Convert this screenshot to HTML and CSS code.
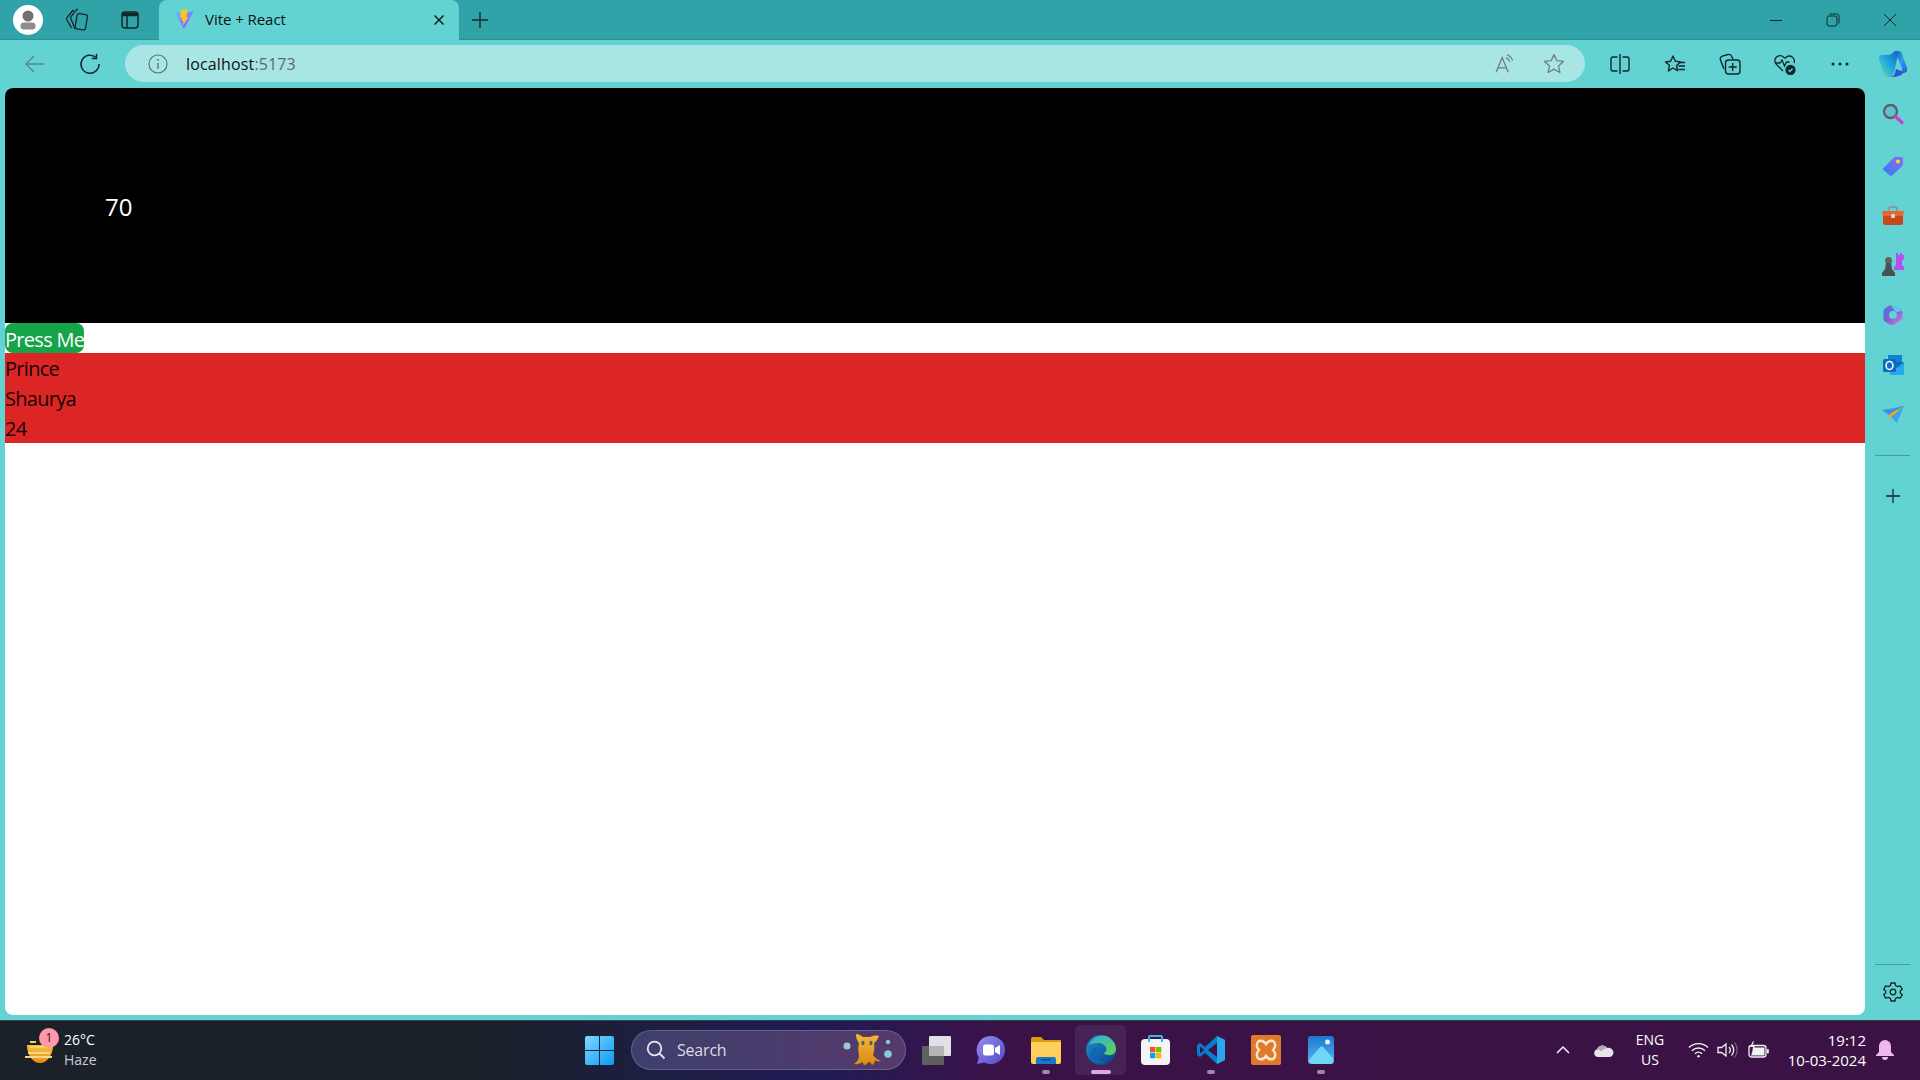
FILE: index.html
```html
<!DOCTYPE html>
<html lang="en">
<head>
<meta charset="utf-8">
<title>Vite + React</title>
<link rel="stylesheet" href="styles.css">
</head>
<body>
<div class="tabbar">
  <div class="slot profile"><svg width="30" height="30" viewBox="0 0 30 30"><circle cx="15" cy="15" r="15" fill="#fff"/><circle cx="15" cy="11" r="5.500" fill="#707070"/><rect x="7.500" y="17.500" width="15" height="7" rx="3.500" fill="#8c8c8c"/></svg></div>
  <div class="slot collections-tab"><svg width="24" height="24" viewBox="0 0 24 24" fill="none" stroke="#14282a" stroke-width="1.300" stroke-linejoin="round"><path d="M9 2.500a2 2 0 0 0-2 1L2 9.500a2 2 0 0 0 0 2.500l4.500 8"/><path d="M13 1.500a2 2 0 0 0-2 .8L6 8.500a2 2 0 0 0 0 2.500l4 10"/><rect x="11" y="6" width="10.500" height="15.500" rx="2.200" transform="rotate(10 16 14)" fill="#2fa3a7"/></svg></div>
  <div class="slot vtabs"><svg width="20" height="20" viewBox="0 0 20 20" fill="none" stroke="#14282a" stroke-width="1.500"><rect x="2" y="2" width="16" height="16" rx="3"/><path d="M2 4.500h16" stroke-width="3.500"/><path d="M7 6v12"/></svg></div>
  <div class="tab">
    <svg class="favicon" width="22" height="22" viewBox="0 0 20 20"><defs><linearGradient id="vg" x1="0" y1="0" x2="1" y2="1"><stop offset="0" stop-color="#41d1ff"/><stop offset="1" stop-color="#bd34fe"/></linearGradient></defs><path d="M1 3l9 1.600L19 3 10 19z" fill="url(#vg)"/><path d="M13.500 0.800L7 2.200 6.600 9l2-.4-.6 3.400 1.600-.4-.6 4.400L14 8l-2.200.4z" fill="#ffc517"/></svg>
    <span class="tab-title">Vite + React</span>
    <svg class="tab-close" width="12" height="12" viewBox="0 0 12 12" stroke="#111" stroke-width="1.400"><path d="M1.500 1.500l9 9M10.500 1.500l-9 9"/></svg>
  </div>
  <div class="slot newtab"><svg width="18" height="18" viewBox="0 0 18 18" stroke="#14282a" stroke-width="1.400"><path d="M9 1v16M1 9h16"/></svg></div>
  <div class="spacer"></div>
  <div class="slot winctl"><svg width="14" height="14" viewBox="0 0 14 14" stroke="#14282a" stroke-width="1"><path d="M1 7.500h12"/></svg></div>
  <div class="slot winctl"><svg width="14" height="14" viewBox="0 0 14 14" fill="none" stroke="#14282a" stroke-width="1"><rect x="1" y="3" width="10" height="10" rx="2"/><path d="M3.500 1h7a2.500 2.500 0 0 1 2.500 2.500v7"/></svg></div>
  <div class="slot winctl"><svg width="14" height="14" viewBox="0 0 14 14" stroke="#14282a" stroke-width="1"><path d="M1 1l12 12M13 1L1 13"/></svg></div>
</div>

<div class="toolbar">
  <div class="slot tool-nav"><svg width="22" height="22" viewBox="0 0 22 22" fill="none" stroke="#4f8b8e" stroke-width="1.400"><path d="M20 11H2M10 3l-8 8 8 8"/></svg></div>
  <div class="slot tool-nav reload"><svg width="22" height="22" viewBox="0 0 22 22" fill="none" stroke="#14282a" stroke-width="1.500"><path d="M17 4.500A9 9 0 1 0 20 11"/><path d="M17.500 0.800v4.700h-4.700"/></svg></div>
  <div class="address">
    <svg class="addr-info" width="20" height="20" viewBox="0 0 20 20" fill="none" stroke="#5c6b6c" stroke-width="1.100"><circle cx="10" cy="10" r="9"/><path d="M10 9v6" stroke-width="1.300"/><circle cx="10" cy="6" r=".9" fill="#5c6b6c" stroke="none"/></svg>
    <span class="url">localhost<span class="url-port">:5173</span></span>
    <div class="spacer"></div>
    <div class="addr-btn"><svg width="22" height="20" viewBox="0 0 20 18" fill="none" stroke="#6f7f80" stroke-width="1.200"><path d="M1 16.500L6.500 3 12 16.500M3 12.500h7"/><path d="M10 3.500a5 5 0 0 1 3.500 3.500M11 .8a8 8 0 0 1 5 5"/></svg></div>
    <div class="addr-btn"><svg width="22" height="21" viewBox="0 0 22 21" fill="none" stroke="#6f7f80" stroke-width="1.300" stroke-linejoin="round"><path d="M11 1.500l2.800 6.200 6.700.7-5 4.500 1.400 6.600-5.900-3.400-5.900 3.400 1.400-6.600-5-4.500 6.700-.7z"/></svg></div>
  </div>
  <div class="tool-right">
    <div class="slot tool-act"><svg width="20" height="20" viewBox="0 0 20 20" fill="none" stroke="#14282a" stroke-width="1.400"><path d="M7.500 3H3a2 2 0 0 0-2 2v10a2 2 0 0 0 2 2h4.500M12.500 3H17a2 2 0 0 1 2 2v10a2 2 0 0 1-2 2h-4.500"/><path d="M10 0v20"/></svg></div>
    <div class="slot tool-act"><svg width="22" height="22" viewBox="0 0 22 22" fill="none" stroke="#14282a" stroke-width="1.400" stroke-linejoin="round"><path d="M9 2l2.300 5.300 5.200.6-3.900 3.600 1 5.200L9 14l-4.600 3 1-5.700L1.500 8l5.200-.7z" transform="translate(0 1)"/><path d="M15 9.500h6M14.500 13h6.500M14.500 16.500h6.500"/></svg></div>
    <div class="slot tool-act"><svg width="22" height="22" viewBox="0 0 22 22" fill="none" stroke="#14282a" stroke-width="1.400"><path d="M5 16L1.500 7a3 3 0 0 1 1.800-3.800L9 1.500a3 3 0 0 1 3.500 1.500L14 6"/><rect x="6.500" y="7" width="14.500" height="14" rx="3"/><path d="M13.700 10v8M9.700 14h8"/></svg></div>
    <div class="slot tool-act"><svg width="22" height="22" viewBox="0 0 22 22" fill="none" stroke="#14282a" stroke-width="1.300"><path d="M9 18L2.500 11.500a5 5 0 0 1 7-7.500l1.500 1.200 1.500-1.200a5 5 0 0 1 7.500 6"/><path d="M1 10h5l2-3 2.500 6 2-4h3"/><circle cx="16.500" cy="17" r="4.500" fill="#14282a"/><path d="M14.500 17l1.500 1.500 2.500-3" stroke="#62d2d3"/></svg></div>
    <div class="slot tool-act"><svg width="20" height="4" viewBox="0 0 20 4" fill="#14282a"><circle cx="3" cy="2" r="1.500"/><circle cx="10" cy="2" r="1.500"/><circle cx="17" cy="2" r="1.500"/></svg></div>
    <div class="slot tool-copilot"><svg width="30" height="28" viewBox="0 0 30 28"><defs><linearGradient id="cp1" x1="0" y1="1" x2="1" y2="0"><stop offset="0" stop-color="#7ce08f"/><stop offset=".5" stop-color="#1fa8e0"/><stop offset="1" stop-color="#1560c8"/></linearGradient><linearGradient id="cp2" x1="0" y1="0" x2="1" y2="1"><stop offset="0" stop-color="#0f6bb0"/><stop offset=".5" stop-color="#2b9bef"/><stop offset="1" stop-color="#2f55d8"/></linearGradient></defs><path d="M17 1h3c2 0 3.500 1 4 3l5 14c1 3-1 5-4 5h-4c2 0 3.500-2 3-4.500L19 6c-.5-2-1-4-2-5z" fill="url(#cp2)"/><path d="M13 27h-3c-2 0-3.500-1-4-3L1 10C0 7 2 5 5 5h5c3 0 4-2 7-4 2-1 3 2 3 4l-3 13c-.7 4-1.500 9-4 9z" fill="url(#cp1)"/><path d="M12 27c2 0 4-1 5-4l1-4 8 3c-2 3-5 5-14 5z" fill="#2f55d8"/></svg></div>
  </div>
</div>

<div class="workspace">
  <main class="page">
    <div class="hero">70</div>
    <button class="press" type="button">Press Me</button>
    <div class="names">
      <div class="name-row">Prince</div>
      <div class="name-row">Shaurya</div>
      <div class="name-row">24</div>
    </div>
  </main>
  <aside class="sidebar">
    <div class="side-item"><svg width="22" height="22" viewBox="0 0 22 22" fill="none"><circle cx="8.500" cy="8.500" r="6.500" fill="#5cc4d0" stroke="#5f6062" stroke-width="2.400"/><path d="M14 14l6 5.500" stroke="#c93fd8" stroke-width="3.200" stroke-linecap="round"/></svg></div>
    <div class="side-item side-low"><svg width="22" height="22" viewBox="0 0 22 22"><defs><linearGradient id="tg" x1="0" y1="1" x2="1" y2="0"><stop offset="0" stop-color="#2f7cf0"/><stop offset="1" stop-color="#8b6df0"/></linearGradient></defs><path d="M1.500 13L12 2.500c.5-.5 1-.5 1.500-.5H20c.5 0 1 .5 1 1v6.500c0 .5-.2 1-.5 1.300L10 20.500c-.6.600-1.500.6-2 0L1.500 15c-.6-.6-.6-1.400 0-2z" fill="url(#tg)"/><circle cx="16" cy="6.500" r="2" fill="#ffd23f"/></svg></div>
    <div class="side-item side-low"><svg width="24" height="20" viewBox="0 0 24 20"><path d="M8 5V2.500C8 1.500 8.500 1 9.500 1h5c1 0 1.500.5 1.500 1.500V5" fill="none" stroke="#8a8f94" stroke-width="1.500"/><path d="M1 5h22l-1 5H2z" fill="#e8662c"/><path d="M2 10h20v7c0 1-.7 2-2 2H4c-1.300 0-2-1-2-2z" fill="#c7481a"/><rect x="10" y="8" width="4" height="4" rx="1" fill="#d9d9d9"/></svg></div>
    <div class="side-item"><svg width="24" height="24" viewBox="0 0 24 24"><path d="M15 0h2v2h2V0h2v2h2v4l-2 1.500V12l2 2v3h-10v-3l2-2V7.500L15 6z" fill="#b84ef0"/><circle cx="7.500" cy="7.500" r="3.500" fill="#5f6365"/><path d="M5 10h5l1 6 3 4v3H1v-3l3-4z" fill="#4c4f50"/></svg></div>
    <div class="side-item"><svg width="22" height="22" viewBox="0 0 22 22"><defs><linearGradient id="m3" x1="0" y1="0" x2="1" y2="1"><stop offset="0" stop-color="#3c7ae0"/><stop offset=".5" stop-color="#8b5bd0"/><stop offset="1" stop-color="#c58be8"/></linearGradient></defs><path d="M9 1.500L18 5c1.500.6 2.500 2 2.500 3.500v5c0 1.500-1 3-2.500 3.500l-6 3.500c-1.500.8-3 .5-4 0L3.500 18c-1.300-.8-2-2-2-3.500V7.500C1.500 6 2.300 4.800 3.500 4L7 1.800c.6-.4 1.400-.5 2-.3z" fill="url(#m3)"/><circle cx="11" cy="11" r="4" fill="#62d2d3"/><path d="M9 1.500L18 5c1 .5 1.500 1.500 2 2l-6 1c-2-2-3-4-5-6.500z" fill="#5ec8ee"/></svg></div>
    <div class="side-item"><svg width="22" height="22" viewBox="0 0 22 22"><rect x="6" y="1" width="14" height="7" fill="#1282d6"/><path d="M8 8h14v12a1 1 0 0 1-1 1H8z" fill="#28a8ea"/><path d="M8 8h14l-7 6z" fill="#0a6dbf"/><rect x="1" y="5" width="13" height="13" rx="1.500" fill="#0f6cbd"/><ellipse cx="7.500" cy="11.500" rx="3.400" ry="4" fill="none" stroke="#fff" stroke-width="1.600"/></svg></div>
    <div class="side-item"><svg width="24" height="20" viewBox="0 0 24 20"><path d="M1 5L23 1 16 18 11 13z" fill="#3da3ee"/><path d="M1 5h9l13-4-13 8z" fill="#2e8fe0"/><path d="M5 14L10 8l13-7-13 11z" fill="#f0a818"/></svg></div>
    <div class="side-rule"></div>
    <div class="side-item side-plus"><svg width="16" height="16" viewBox="0 0 16 16" stroke="#14282a" stroke-width="1.300"><path d="M8 1v14M1 8h14"/></svg></div>
    <div class="spacer"></div>
    <div class="side-rule"></div>
    <div class="side-item side-gear"><svg width="20" height="20" viewBox="0 0 20 20" fill="none" stroke="#14282a" stroke-width="1.300" stroke-linejoin="round"><path d="M8 1h4l.6 2.600 2.200 1.100 2.500-.8 2 3.400-2 1.700v2l2 1.700-2 3.400-2.500-.8-2.200 1.100L12 19H8l-.6-2.600-2.200-1.100-2.500.8-2-3.400 2-1.700V9L.7 7.300l2-3.400 2.500.8 2.200-1.100z"/><circle cx="10" cy="10" r="2.800"/></svg></div>
  </aside>
</div>

<footer class="taskbar">
  <div class="weather">
    <div class="weather-icon">
      <svg width="30" height="30" viewBox="0 0 30 30"><defs><linearGradient id="sun" x1="0" y1="0" x2="0" y2="1"><stop offset="0" stop-color="#f7c23c"/><stop offset="1" stop-color="#f08a12"/></linearGradient></defs><path d="M3 9h26a13 18 0 0 1-26 0z" fill="url(#sun)"/><rect x="6" y="5" width="6" height="2" fill="#f3cf6a"/><rect x="6" y="10" width="16" height="2" fill="#f3cf6a"/><rect x="4" y="16" width="22" height="2" fill="#f3d98a"/><rect x="1" y="20" width="27" height="2" fill="#f3d98a"/></svg>
      <span class="badge">1</span>
    </div>
    <div class="weather-text"><div class="temp">26°C</div><div class="haze">Haze</div></div>
  </div>
  <div class="task-slot"><svg width="29" height="29" viewBox="0 0 29 29"><defs><linearGradient id="wg" x1="0" y1="0" x2="1" y2="1"><stop offset="0" stop-color="#7fd8ff"/><stop offset="1" stop-color="#0a9bf5"/></linearGradient></defs><path d="M2 0h12v14H0V2a2 2 0 0 1 2-2zM15 0h12a2 2 0 0 1 2 2v12H15zM0 15h14v14H2a2 2 0 0 1-2-2zM15 15h14v12a2 2 0 0 1-2 2H15z" fill="url(#wg)"/></svg></div>
  <div class="search">
    <svg width="20" height="20" viewBox="0 0 20 20" fill="none" stroke="#e6e6ee" stroke-width="1.800"><circle cx="8.500" cy="8.500" r="6.800"/><path d="M13.500 13.500l5 5"/></svg>
    <span class="search-label">Search</span>
    <div class="spacer"></div>
    <svg class="mascot" width="50" height="36" viewBox="0 0 50 36"><defs><linearGradient id="mas" x1="0" y1="0" x2="0" y2="1"><stop offset="0" stop-color="#f7b733"/><stop offset="1" stop-color="#d98a12"/></linearGradient></defs><circle cx="4" cy="14" r="3.500" fill="#9fc9cf"/><circle cx="45" cy="10" r="2.200" fill="#8fc7d8"/><circle cx="45" cy="22" r="3.800" fill="#8fc7d8"/><path d="M13 2c3 0 5 2 7 3h7c2-1 5-2 9-1-1 3-3 6-5 7 1 5 0 9-1 12 2 3 5 5 8 6-3 1-5 0-6-1 0 2-1 4-3 5-1-2-2-3-3-3-2 1-3 3-5 3-1-1-1-2-1-3-2 1-6 3-9 2 3-2 5-5 5-8-1-4-1-9 0-13-2-2-3-5-3-9z" fill="url(#mas)"/><ellipse cx="20" cy="11" rx="1.500" ry="2.300" fill="#2c6a78"/><ellipse cx="28" cy="11" rx="1.500" ry="2.300" fill="#2c6a78"/></svg>
  </div>
  <div class="task-slot"><svg width="30" height="29" viewBox="0 0 30 29"><rect x="1" y="10" width="22" height="19" rx="1" fill="#5f5f5f"/><rect x="8" y="0" width="22" height="20" rx="1" fill="#f2f2f2" fill-opacity=".92"/><rect x="8" y="10" width="15" height="10" fill="#b5b5b5"/></svg></div>
  <div class="task-slot"><svg width="30" height="30" viewBox="0 0 30 30"><defs><linearGradient id="chat" x1="0" y1="0" x2="1" y2="1"><stop offset="0" stop-color="#9a8cf0"/><stop offset="1" stop-color="#4f4bc8"/></linearGradient></defs><path d="M15 1a14 14 0 1 1-6.500 26.400L1 29l1.800-6.600A14 14 0 0 1 15 1z" fill="url(#chat)"/><rect x="7" y="9.500" width="11" height="11" rx="2.500" fill="#fff"/><path d="M19 13l5-3v10l-5-3z" fill="#fff"/></svg></div>
  <div class="task-slot"><svg width="30" height="27" viewBox="0 0 30 27"><path d="M0 2a2 2 0 0 1 2-2h8l3 3h17v5H0z" fill="#dd9d0a"/><path d="M0 5h30v20a2 2 0 0 1-2 2H2a2 2 0 0 1-2-2z" fill="#fdd05c"/><path d="M5 22a2 2 0 0 1 2-2h16a2 2 0 0 1 2 2v5H5z" fill="#1a78c8"/><rect x="10" y="22" width="10" height="1.500" fill="#0b4f94"/></svg><span class="dot"></span></div>
  <div class="task-slot task-active"><svg width="30" height="30" viewBox="0 0 30 30"><defs><linearGradient id="eg" x1="0" y1="0" x2="1" y2="1"><stop offset="0" stop-color="#1f8fd0"/><stop offset="1" stop-color="#0b3f8a"/></linearGradient><linearGradient id="eg2" x1="0" y1="0" x2="1" y2="1"><stop offset="0" stop-color="#2cb0dc"/><stop offset="1" stop-color="#62d257"/></linearGradient></defs><circle cx="15" cy="15" r="15" fill="url(#eg)"/><path d="M3 10C6 2 14 0 19 1c6 1 11 7 11 13 0 4-3 6-7 6-3 0-5-1-5-2 2-1 3-3 2-5-1-3-4-5-8-5-4 0-7 1-9 2z" fill="url(#eg2)"/><path d="M12 13c-3 1-4 5-2 9 2 3 5 5 9 5-4 2-9 2-13-2-2-3-2-7 0-10 1-2 4-3 6-2z" fill="#0d67b5"/></svg><span class="dot dot-active"></span></div>
  <div class="task-slot"><svg width="29" height="30" viewBox="0 0 29 30"><rect y="4" width="29" height="26" rx="4" fill="#f4f4f4"/><path d="M8 7V2a1 1 0 0 1 1-1h11a1 1 0 0 1 1 1v5" fill="none" stroke="#35b8e6" stroke-width="2"/><rect x="9" y="12" width="5.300" height="5.300" fill="#f25022"/><rect x="15" y="12" width="5.300" height="5.300" fill="#7fba00"/><rect x="9" y="18" width="5.300" height="5.300" fill="#00a4ef"/><rect x="15" y="18" width="5.300" height="5.300" fill="#ffb900"/></svg></div>
  <div class="task-slot"><svg width="30" height="30" viewBox="0 0 30 30"><path d="M21 1l8 4v20l-8 4L9 18l-5 4-3-2V10l3-2 5 4z" fill="#0a7dc9"/><path d="M21 1l8 4v20l-8 4z" fill="#2ba6ec"/><path d="M21 8L12 15l9 7z" fill="#3e0f4a"/><path d="M4 11.500L8 15l-4 3.500z" fill="#3e0f4a"/></svg><span class="dot"></span></div>
  <div class="task-slot"><svg width="30" height="30" viewBox="0 0 30 30"><rect width="30" height="30" rx="2" fill="#e07a2b"/><path d="M8 6c3-1 5 0 7 3 2-3 4-4 7-3 3 2 3 6 0 9 3 3 3 7 0 9-3 1-5 0-7-3-2 3-4 4-7 3-3-2-3-6 0-9-3-3-3-7 0-9z" fill="none" stroke="#f9e6d3" stroke-width="2.400"/></svg></div>
  <div class="task-slot"><svg width="26" height="28" viewBox="0 0 26 28"><defs><linearGradient id="ph" x1="0" y1="0" x2="0" y2="1"><stop offset="0" stop-color="#1c78cf"/><stop offset="1" stop-color="#57b5ee"/></linearGradient></defs><rect width="26" height="28" rx="3" fill="url(#ph)"/><circle cx="19.500" cy="6" r="2.500" fill="#e4f3ff"/><path d="M1 24l11-13c1-1 2-1 3 0l10 11v3a3 3 0 0 1-3 3H6c-3 0-5-2-5-4z" fill="#6fd6f6"/></svg><span class="dot"></span></div>
  <div class="tray">
    <div class="tray-icon"><svg width="16" height="10" viewBox="0 0 16 10" fill="none" stroke="#f2f2f2" stroke-width="1.500"><path d="M2 8l6-6 6 6"/></svg></div>
    <div class="tray-icon"><svg width="22" height="13" viewBox="0 0 22 13"><path d="M6 13a4 4 0 0 1-1-7.800A6 6 0 0 1 15.500 4 4.500 4.500 0 0 1 18 13z" fill="#e8e4ea"/><path d="M5 5.200A6 6 0 0 1 15.500 4c-3 .3-5 2-6 3.500-1.500-1.300-3-2-4.500-2.300z" fill="#b9a8b9"/></svg></div>
    <div class="lang"><div>ENG</div><div>US</div></div>
    <div class="tray-small wifi"><svg width="21" height="16" viewBox="0 0 21 16" fill="none" stroke="#f2f2f2" stroke-width="1.400"><path d="M1 5.500a13.500 13.500 0 0 1 19 0M4 8.700a9.300 9.300 0 0 1 13 0M7 11.700a5 5 0 0 1 7 0"/><circle cx="10.500" cy="14.300" r="1.200" fill="#f2f2f2" stroke="none"/></svg></div>
    <div class="tray-small speaker"><svg width="21" height="18" viewBox="0 0 21 18" fill="none" stroke="#f2f2f2" stroke-width="1.300"><path d="M1 6.500v5h3.500L9 15V3L4.500 6.500z"/><path d="M12 6a4 4 0 0 1 0 6M14.500 3.500a8 8 0 0 1 0 11"/><path d="M17.500 1.500a12 12 0 0 1 0 15" stroke="#6f5a70"/></svg></div>
    <div class="tray-small battery"><svg width="21" height="18" viewBox="0 0 21 18" fill="none"><rect x="1" y="4.500" width="17" height="11.500" rx="2.500" stroke="#f2f2f2" stroke-width="1.300"/><path d="M3 14.500L5.500 6.500h11v8z" fill="#f2f2f2"/><rect x="19" y="8" width="1.800" height="4.500" rx=".8" fill="#f2f2f2"/><path d="M5.500 0.500L3 5.500h3L5 9" stroke="#f2f2f2" stroke-width="1.200"/></svg></div>
    <div class="clock"><div>19:12</div><div>10-03-2024</div></div>
    <div class="tray-icon"><svg width="18" height="20" viewBox="0 0 18 20"><path d="M9 0a6 6 0 0 1 6 6v6l3 3v1H0v-1l3-3V6a6 6 0 0 1 6-6z" fill="#f0b8ee"/><path d="M6 17h6a3 3 0 0 1-6 0z" fill="#f0b8ee"/></svg></div>
  </div>
</footer>
</body>
</html>
```

FILE: styles.css
```css
* { box-sizing: border-box; }

html, body {
  margin: 0;
  height: 100%;
}

body {
  width: 1920px;
  height: 1080px;
  overflow: hidden;
  display: flex;
  flex-direction: column;
  font-family: "Open Sans", "Noto Sans", sans-serif;
  background: #62d2d3;
  color: #000;
}

svg { display: block; flex: none; }

.spacer { flex: 1; }

.slot {
  display: flex;
  align-items: center;
  justify-content: center;
  height: 100%;
  flex: none;
}

/* Tab strip */
.tabbar {
  height: 40px;
  flex: none;
  display: flex;
  padding: 0 2px 0 8px;
  background: #2fa3a7;
  box-shadow: inset 0 -1px 0 #2b8f93;
}

.profile { width: 40px; }
.collections-tab { width: 58px; }
.vtabs { width: 48px; }

.tab {
  width: 300px;
  margin-left: 5px;
  display: flex;
  align-items: center;
  padding: 0 14px 2px 14px;
  background: #62d2d3;
  border-radius: 8px 8px 0 0;
}

.tab-title {
  margin-left: 10px;
  font-size: 15px;
  letter-spacing: -0.05px;
  color: #111;
  flex: 1;
}

.tab-close { margin-top: 2px; }

.newtab { width: 42px; }
.winctl { width: 57px; }

/* Toolbar */
.toolbar {
  height: 48px;
  flex: none;
  display: flex;
  align-items: center;
  padding-left: 13px;
  background: #62d2d3;
}

.tool-nav { width: 44px; }
.reload { margin-left: 11px; }

.address {
  width: 1460px;
  height: 37px;
  margin: -1px 0 0 13px;
  display: flex;
  align-items: center;
  padding: 0 11px 0 23px;
  background: #a8e6e6;
  border-radius: 19px;
}

.url {
  margin-left: 18px;
  font-size: 16px;
  letter-spacing: 0.15px;
  color: #111;
}

.url-port { color: #5c6b6c; }

.addr-btn {
  width: 40px;
  margin-left: 10px;
  display: flex;
  justify-content: center;
}

.addr-btn + .addr-btn { margin-left: 8px; }

.tool-right {
  display: flex;
  align-items: center;
  height: 100%;
  margin-left: 7px;
}

.tool-act { width: 55px; }
.tool-copilot { width: 52px; }

/* Browser window body */
.workspace {
  flex: 1;
  min-height: 0;
  display: flex;
}

.page {
  width: 1860px;
  margin: 0 0 5px 5px;
  background: #fff;
  border-radius: 8px;
  overflow: hidden;
  font-size: 20px;
  letter-spacing: -0.7px;
  line-height: 30px;
}

.hero {
  height: 235px;
  padding: 101px 0 0 100px;
  background: #000;
  color: #fff;
  font-size: 24px;
  line-height: 36px;
  letter-spacing: 0;
}

.press {
  display: block;
  height: 30px;
  padding: 2px 0 0;
  border: 0;
  width: 79px;
  background: #16a34a;
  color: #fff;
  font: inherit;
  letter-spacing: inherit;
  white-space: nowrap;
  border-radius: 8px;
}

.names {
  background: #dc2626;
  color: #170404;
}

.name-row {
  height: 30px;
  padding-top: 1px;
}

.sidebar {
  width: 55px;
  display: flex;
  flex-direction: column;
  align-items: center;
  padding: 1px 0 3px;
}

.side-item {
  height: 50.2px;
  flex: none;
  display: flex;
  align-items: center;
  justify-content: center;
}

.side-low { padding-top: 4px; }

.side-rule {
  width: 35px;
  height: 1px;
  flex: none;
  margin-top: 15px;
  background: #4f9a9c;
}

.side-plus { margin-top: 15px; }
.side-gear { margin-top: 2px; }

/* Windows taskbar */
.taskbar {
  height: 60px;
  flex: none;
  display: flex;
  align-items: center;
  padding-left: 24px;
  color: #fff;
  background: linear-gradient(90deg, #1a2129 0%, #1a2129 25%, #1f1c55 42%, #3a1248 52%, #3b1244 100%);
  box-shadow: inset 0 1px 0 #3b3f47;
}

.weather {
  width: 548px;
  display: flex;
  align-items: center;
}

.weather-icon {
  position: relative;
  width: 40px;
  margin-top: 2px;
}

.badge {
  position: absolute;
  left: 15px;
  top: -8px;
  width: 20px;
  height: 20px;
  border-radius: 50%;
  background: #ff98a8;
  color: #1a1a1a;
  font-size: 12px;
  line-height: 20px;
  text-align: center;
}

.temp {
  font-size: 14px;
  line-height: 20px;
}

.haze {
  font-size: 14px;
  line-height: 20px;
  color: #c9cdd1;
}

.task-slot {
  position: relative;
  width: 55px;
  height: 50px;
  flex: none;
  display: flex;
  align-items: center;
  justify-content: center;
}

.task-active {
  border: solid transparent;
  border-width: 0 2px;
  background: rgba(255, 255, 255, 0.07) padding-box;
  border-radius: 6px;
}

.dot {
  position: absolute;
  left: 50%;
  bottom: 1px;
  width: 8px;
  height: 4px;
  margin-left: -4px;
  border-radius: 2px;
  background: #9b8d9f;
}

.dot-active {
  width: 20px;
  margin-left: -10px;
  background: #e0a6e6;
}

.search {
  width: 275px;
  height: 40px;
  flex: none;
  margin: 0 2px 0 4px;
  display: flex;
  align-items: center;
  padding: 0 12px 0 14px;
  border-radius: 20px;
  border: 1px solid rgba(255, 255, 255, 0.18);
  background: linear-gradient(90deg, #3d3f6c, #55396c);
}

.search-label {
  margin-left: 11px;
  font-size: 16px;
  letter-spacing: -0.2px;
  color: #dcdce6;
}

.tray {
  margin-left: auto;
  display: flex;
  align-items: center;
  padding-right: 15px;
}

.tray-icon {
  width: 40px;
  display: flex;
  justify-content: center;
}

.lang {
  width: 54px;
  text-align: center;
  font-size: 14px;
  line-height: 20px;
}

.tray-small {
  display: flex;
  justify-content: center;
}

.wifi { width: 30px; margin-left: 6px; }
.speaker { width: 29px; }
.battery { width: 32px; }

.clock {
  width: 92px;
  margin-right: -1px;
  text-align: right;
  font-size: 15px;
  line-height: 20px;
}
```
